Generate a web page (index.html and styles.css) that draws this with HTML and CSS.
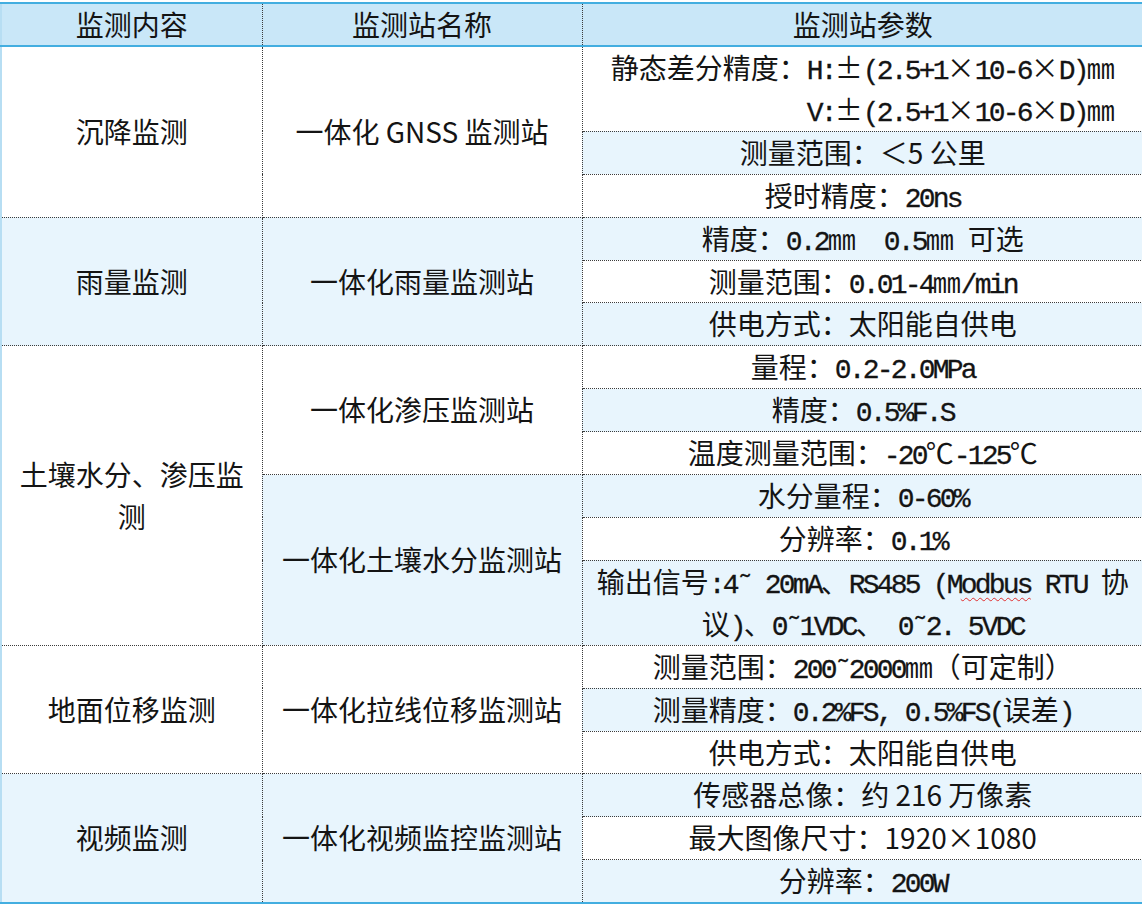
FILE: index.html
```html
<!DOCTYPE html>
<html lang="zh-CN">
<head>
<meta charset="utf-8">
<title>监测站参数</title>
<link rel="stylesheet" href="styles.css">
</head>
<body>
<table class="tbl">
  <colgroup>
    <col class="w1"><col class="w2"><col class="w3">
  </colgroup>
  <thead>
    <tr><th>监测内容</th><th>监测站名称</th><th>监测站参数</th></tr>
  </thead>
  <tbody>
    <tr>
      <td rowspan="3">沉降监测</td>
      <td rowspan="3">一体化 GNSS 监测站</td>
      <td><div class="two">静态差分精度：<span class="m">H:</span><span class="fw">±</span><span class="m">(2.5+1</span><span class="fw">×</span><span class="m">10-6</span><span class="fw">×</span><span class="m">D)</span>㎜<br><span class="m">V:</span><span class="fw">±</span><span class="m">(2.5+1</span><span class="fw">×</span><span class="m">10-6</span><span class="fw">×</span><span class="m">D)</span>㎜</div></td>
    </tr>
    <tr><td class="b">测量范围：＜5 公里</td></tr>
    <tr><td>授时精度：<span class="m">20ns</span></td></tr>

    <tr>
      <td rowspan="3" class="b">雨量监测</td>
      <td rowspan="3" class="b">一体化雨量监测站</td>
      <td class="b">精度：<span class="m">0.2</span>㎜<span class="m">  0.5</span>㎜<span class="m"> </span>可选</td>
    </tr>
    <tr><td>测量范围：<span class="m">0.01-4</span>㎜<span class="m">/min</span></td></tr>
    <tr><td class="b">供电方式：太阳能自供电</td></tr>

    <tr>
      <td rowspan="6" class="c1">土壤水分、渗压监测</td>
      <td rowspan="3">一体化渗压监测站</td>
      <td>量程：<span class="m">0.2-2.0MPa</span></td>
    </tr>
    <tr><td class="b">精度：<span class="m">0.5%F.S</span></td></tr>
    <tr><td>温度测量范围：<span class="m">-20</span>℃<span class="m">-125</span>℃</td></tr>
    <tr>
      <td rowspan="3" class="b">一体化土壤水分监测站</td>
      <td class="b">水分量程：<span class="m">0-60%</span></td>
    </tr>
    <tr><td>分辨率：<span class="m">0.1%</span></td></tr>
    <tr><td class="b">输出信号<span class="m">:4˜ 20mA</span>、<span class="m">RS485 (M<span class="sp">odbus</span> RTU </span>协<br>议<span class="m">)</span>、<span class="m">0˜1VDC</span>、<span class="m"> 0˜2. 5VDC</span></td></tr>

    <tr>
      <td rowspan="3">地面位移监测</td>
      <td rowspan="3">一体化拉线位移监测站</td>
      <td>测量范围：<span class="m">200˜2000</span>㎜（可定制）</td>
    </tr>
    <tr><td class="b">测量精度：<span class="m">0.2%FS, 0.5%FS(</span>误差<span class="m">)</span></td></tr>
    <tr><td>供电方式：太阳能自供电</td></tr>

    <tr>
      <td rowspan="3" class="b">视频监测</td>
      <td rowspan="3" class="b">一体化视频监控监测站</td>
      <td class="b">传感器总像：约 216 万像素</td>
    </tr>
    <tr><td>最大图像尺寸：1920<span class="fw">×</span>1080</td></tr>
    <tr><td class="b">分辨率：<span class="m">200W</span></td></tr>
  </tbody>
</table>
</body>
</html>
```

FILE: styles.css
```css
html, body {
  margin: 0;
  padding: 0;
  background: #ffffff;
}

.tbl {
  border-collapse: collapse;
  table-layout: fixed;
  width: 1142px;
  margin-top: 2px;
  font-family: "Noto Sans CJK SC", "Noto Sans", sans-serif;
  font-size: 28px;
  color: #141414;
  border-top: 2px solid #43aee0;
  border-bottom: 2px solid #43aee0;
  border-left: 2px solid #b7def3;
  border-right: 1px hidden #000;
}

.w1 { width: 261px; }
.w2 { width: 320px; }
.w3 { width: 561px; }

.tbl th {
  background: #c9e7f8;
  font-weight: normal;
  height: 41px;
  line-height: 41px;
  padding: 0;
  border-left: 1px dotted #3c3c3c;
  border-right: 1px dotted #3c3c3c;
  border-bottom: 2px solid #43aee0;
  white-space: nowrap;
}

.tbl td {
  padding: 0 4px;
  line-height: 41.9px;
  text-align: center;
  vertical-align: middle;
  border: 1px dotted #3c3c3c;
  background: #ffffff;
  white-space: nowrap;
}

.tbl td.b {
  background: #e8f5fd;
}

.tbl td.c1 {
  white-space: normal;
  padding: 0 10px;
}

.two {
  display: inline-block;
  text-align: right;
}

.m {
  font-family: "Liberation Mono", "Noto Sans CJK SC", monospace;
  letter-spacing: -2.8px;
  white-space: pre;
  line-height: 1;
  -webkit-text-stroke: 0.3px #141414;
}

.fw {
  display: inline-block;
  width: 1em;
  text-align: center;
  line-height: 1;
}

.sp {
  text-decoration: underline wavy #e03030;
  text-decoration-thickness: 1px;
  text-underline-offset: 4px;
}
```
